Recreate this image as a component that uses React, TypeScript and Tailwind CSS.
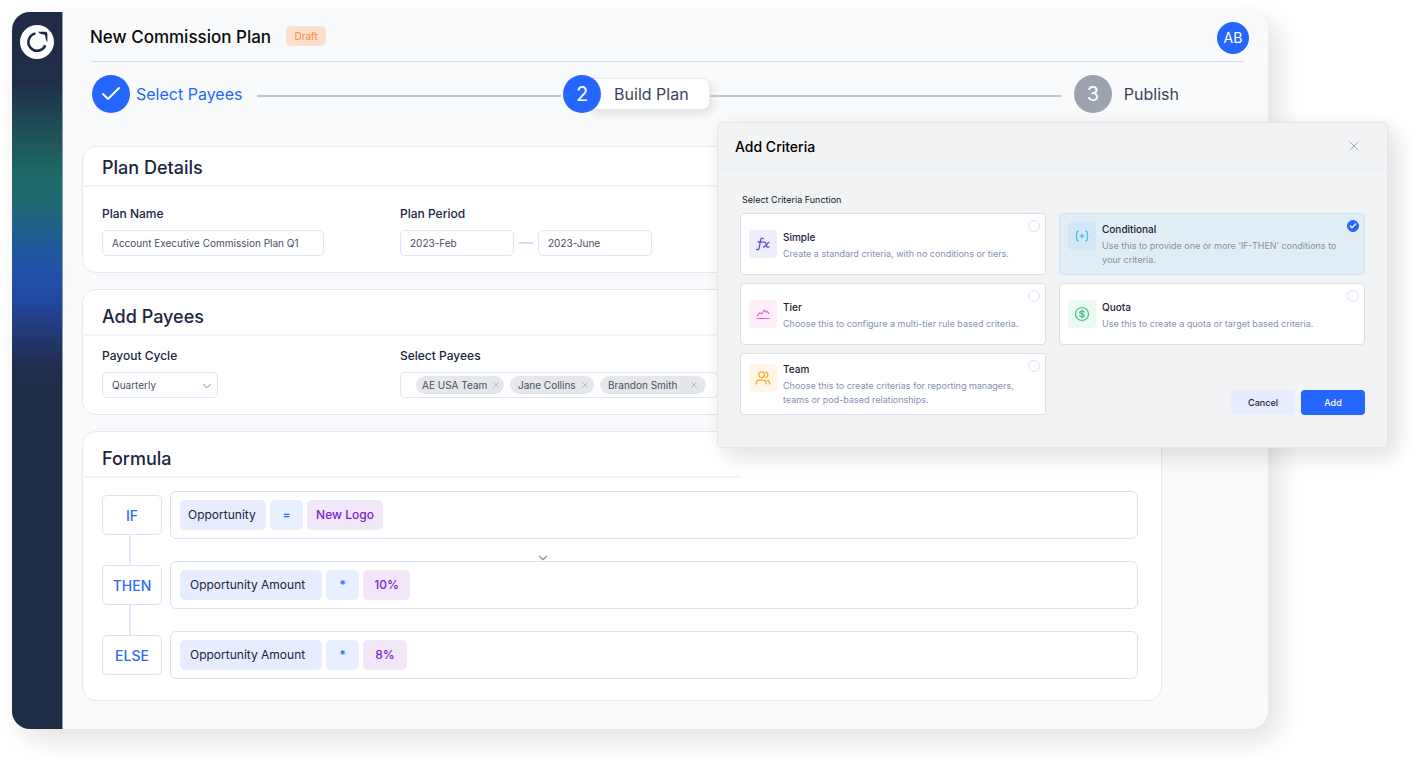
import { useState } from 'react';
import type { ReactNode } from 'react';
import { Check, ChevronDown, X } from 'lucide-react';

const LogoMark = () => (
  <svg viewBox="0 0 34 34" className="size-[34px]" fill="none">
    <circle cx="17" cy="17" r="17" fill="#fff" />
    <path d="M15.500 8.500A8.700 8.700 0 1 0 25.200 20.200" stroke="#1f2c46" strokeWidth="2.600" />
    <path
      d="M18 6.700h7.400q2 0 2 2v8.500c-1.100-1.500-1.900-3-2.100-6-.1-1-.7-1.500-1.700-1.600-2.400-.3-4-1.200-5.600-2.900Z"
      fill="#1f2c46"
    />
  </svg>
);

const FxIcon = () => (
  <svg viewBox="0 0 16 16" className="size-4" fill="none" stroke="#5b52e0" strokeWidth="1.3" strokeLinecap="round">
    <path d="M8.300 2.600C6.900 1.500 5.900 2.300 5.600 4L4.200 11.800C3.900 13.500 2.800 14.300 1.500 13.300" />
    <path d="M3.200 6h4" />
    <path d="M8.600 6.400c1.300-.6 1.900 0 2.300 1.500l.7 2.100c.4 1.300 1 1.600 2.300.9" />
    <path d="M13.900 6.400c-1.500 0-2.900 4.500-5.300 4.600" />
  </svg>
);

const BracesIcon = () => (
  <svg viewBox="0 0 16 16" className="size-4" fill="none" stroke="#45b5f0" strokeWidth="1.2" strokeLinecap="round">
    <path d="M4.300 3.200C3 3.200 2.800 3.800 2.800 4.800v1.700c0 .9-.4 1.500-1.200 1.500.8 0 1.200.6 1.200 1.500v1.700c0 1 .2 1.600 1.500 1.600" />
    <path d="M11.700 3.200c1.300 0 1.500.6 1.500 1.600v1.700c0 .9.4 1.500 1.200 1.500-.8 0-1.200.6-1.200 1.500v1.700c0 1-.2 1.600-1.500 1.600" />
    <path d="M6 8h4M8 6v4" />
  </svg>
);

const ChartIcon = () => (
  <svg viewBox="0 0 16 16" className="size-4" fill="none" stroke="#ea5fc5" strokeWidth="1.2" strokeLinecap="round" strokeLinejoin="round">
    <path d="M2.200 10L4.600 6.900l1.900.9L9.500 4.200l1.300 2 1.400-.8 1.500 2" />
    <path d="M2 12.500h12" />
  </svg>
);

const DollarIcon = () => (
  <svg viewBox="0 0 16 16" className="size-4" fill="none" stroke="#3cc57c" strokeWidth="1.2" strokeLinecap="round">
    <circle cx="8" cy="8" r="6.500" />
    <path d="M10.200 6.200C9.900 5.400 9.100 5.100 8 5.100c-1.300 0-2.200.5-2.200 1.400C5.800 8.500 10.300 7.400 10.300 9.500c0 .9-.9 1.400-2.300 1.400-1.200 0-2.100-.4-2.300-1.200M8 3.900v8.200" />
  </svg>
);

const TeamIcon = () => (
  <svg viewBox="0 0 16 16" className="size-4" fill="none" stroke="#fbab2a" strokeWidth="1.3" strokeLinecap="round">
    <circle cx="6.500" cy="4.800" r="2.900" />
    <path d="M1.500 14v-1.500c0-1.300 1-2.300 2.400-2.300h4.500c1.400 0 2.400 1 2.400 2.300V14" />
    <path d="M10.800 2.100c2.800.5 2.800 4.900 0 5.400" />
    <path d="M12.400 10.400c1.300.3 2.200 1.200 2.200 2.500V14" />
  </svg>
);

type Criteria = {
  id: string;
  name: string;
  text: string;
  icon: ReactNode;
  tile: string;
  tall?: boolean;
};

const criteria: Criteria[] = [
  { id: 'simple', name: 'Simple', text: 'Create a standard criteria, with no conditions or tiers.', icon: <FxIcon />, tile: 'bg-[#eeedfb]' },
  { id: 'conditional', name: 'Conditional', text: 'Use this to provide one or more ‘IF-THEN’ conditions to your criteria.', icon: <BracesIcon />, tile: 'bg-[#d2e8f6]', tall: true },
  { id: 'tier', name: 'Tier', text: 'Choose this to configure a multi-tier rule based criteria.', icon: <ChartIcon />, tile: 'bg-[#fdeefa]' },
  { id: 'quota', name: 'Quota', text: 'Use this to create a quota or target based criteria.', icon: <DollarIcon />, tile: 'bg-[#eaf9f1]' },
  { id: 'team', name: 'Team', text: 'Choose this to create criterias for reporting managers, teams or pod-based relationships.', icon: <TeamIcon />, tile: 'bg-[#fff6e8]', tall: true },
];

const payees = [
  { name: 'AE USA Team', pill: 'w-[88px] pl-1.5 pr-[3px]' },
  { name: 'Jane Collins', pill: 'w-[84px] pl-2 pr-1' },
  { name: 'Brandon Smith', pill: 'w-[106px] pl-2 pr-[7px]' },
];

const rules = [
  { word: 'IF', field: 'Opportunity', fieldBox: 'w-[86px] px-2', op: '=', value: 'New Logo', valueBox: 'w-[76px]' },
  { word: 'THEN', field: 'Opportunity Amount', fieldBox: 'w-[142px] px-2.5', op: '*', value: '10%', valueBox: 'w-[47px]' },
  { word: 'ELSE', field: 'Opportunity Amount', fieldBox: 'w-[142px] px-2.5', op: '*', value: '8%', valueBox: 'w-[44px]' },
];

const fieldClass = 'h-[26px] rounded-[5px] border border-[#dde5f9] bg-white px-[9px] text-[10px] text-[#475063] outline-none';
const labelClass = 'text-[12px] leading-4 font-medium text-[#1b2540]';

type CardProps = { title: string; roomy?: boolean; shortRule?: boolean; children: ReactNode };

function Card({ title, roomy, shortRule, children }: CardProps) {
  return (
    <section className="rounded-[14px] border border-[#e6e9ee] bg-white">
      <h2 className={`px-[19px] text-[18px] leading-[26px] font-medium text-[#1b2540] ${roomy ? 'pt-3.5' : 'pt-2'}`}>{title}</h2>
      <div className={`mt-1 ml-px h-0.5 bg-[#f2f3f5] ${shortRule ? 'w-[61%]' : ''}`} />
      {children}
    </section>
  );
}

function Stepper() {
  return (
    <ol className="mt-[13px] mr-[89px] ml-[29px] flex h-[38px] items-center text-[16px] text-[#3b4557]">
      <li className="flex items-center gap-1.5 text-[#2466ff]">
        <span className="flex size-[38px] items-center justify-center rounded-full bg-[#2466ff] text-white">
          <Check className="size-6" strokeWidth={2} />
        </span>
        Select Payees
      </li>
      <li className="mt-1 mr-0.5 ml-[15px] h-0.5 flex-[303] bg-[#c1c5ce]" />
      <li className="flex items-center">
        <span className="z-10 flex size-[38px] items-center justify-center rounded-full bg-[#2466ff] text-[20px] text-white">2</span>
        <span className="-ml-3 flex h-8 w-[121px] items-center rounded-r-lg border border-[#e8eaee] bg-white pl-6 shadow-[3px_4px_8px_rgba(0,0,0,0.10)]">
          Build Plan
        </span>
      </li>
      <li className="mt-1 mr-[13px] h-0.5 flex-[350] bg-[#c1c5ce]" />
      <li className="flex items-center gap-3">
        <span className="flex size-[38px] items-center justify-center rounded-full bg-[#9ca2ae] text-[20px] text-white">3</span>
        Publish
      </li>
    </ol>
  );
}

function PlanDetails() {
  return (
    <Card title="Plan Details">
      <div className="flex px-[19px] pt-[19px] pb-4">
        <div className="flex w-[298px] flex-col items-start gap-2">
          <label htmlFor="plan-name" className={labelClass}>Plan Name</label>
          <input id="plan-name" defaultValue="Account Executive Commission Plan Q1" className={`${fieldClass} w-[222px]`} />
        </div>
        <div className="flex flex-col items-start gap-2">
          <label htmlFor="period-from" className={labelClass}>Plan Period</label>
          <div className="flex items-center">
            <input id="period-from" defaultValue="2023-Feb" className={`${fieldClass} w-[114px]`} />
            <span className="mx-[5px] h-0.5 w-3.5 bg-[#d3ddec]" />
            <input aria-label="Plan period end" defaultValue="2023-June" className={`${fieldClass} w-[114px]`} />
          </div>
        </div>
      </div>
    </Card>
  );
}

function AddPayees() {
  return (
    <Card title="Add Payees" roomy>
      <div className="flex px-[19px] pt-3 pb-4">
        <div className="flex w-[298px] flex-col items-start gap-2">
          <label htmlFor="cycle" className={labelClass}>Payout Cycle</label>
          <div className="relative flex">
            <select id="cycle" className={`${fieldClass} w-[116px] appearance-none`}>
              <option>Quarterly</option>
            </select>
            <ChevronDown className="pointer-events-none absolute top-[7px] right-1 size-3.5 text-[#a9bbde]" />
          </div>
        </div>
        <div className="flex flex-col items-start gap-2">
          <span className={labelClass}>Select Payees</span>
          <div className="flex h-[26px] w-[318px] items-center gap-1.5 rounded-[5px] border border-[#dde5f9] pl-[15px]">
            {payees.map((p) => (
              <span key={p.name} className={`flex h-[18px] items-center justify-between rounded-full bg-[#e5e7eb] text-[10px] whitespace-nowrap text-[#475063] ${p.pill}`}>
                {p.name}
                <button type="button" aria-label={`Remove ${p.name}`}>
                  <X className="size-2.5 text-[#a3b5da]" />
                </button>
              </span>
            ))}
          </div>
        </div>
      </div>
    </Card>
  );
}

function Formula() {
  return (
    <Card title="Formula" roomy shortRule>
      <div className="flex flex-col pt-[13px] pr-[23px] pb-[21px] pl-[19px]">
        {rules.map((r, i) => (
          <div key={r.word}>
            {i > 0 && (
              <div className="-my-1 flex h-[30px]">
                <span className="ml-[27px] w-0.5 bg-[#e6ecfb]" />
                {i === 1 && <ChevronDown className="mt-4 ml-[405px] size-3.5 text-[#8592ad]" />}
              </div>
            )}
            <div className="flex items-center gap-2">
              <div className="flex h-10 w-[60px] items-center justify-center rounded-[5px] border border-[#d9e2f8] bg-white text-[14px] font-medium text-[#2f6bf5]">
                {r.word}
              </div>
              <div className="flex h-12 flex-1 items-center gap-1 rounded-md border border-[#d9e2f5] px-[9px] text-[12px]">
                <span className={`flex h-[30px] items-center rounded-[5px] bg-[#e7ecfe] whitespace-nowrap text-[#1b2540] ${r.fieldBox}`}>{r.field}</span>
                <span className="flex h-[30px] w-[33px] items-center justify-center rounded-[5px] bg-[#e8f0ff] font-medium text-[#2466ff]">{r.op}</span>
                <span className={`flex h-[30px] items-center justify-center rounded-[5px] bg-[#f1e7f9] font-medium whitespace-nowrap text-[#7623ce] ${r.valueBox}`}>{r.value}</span>
              </div>
            </div>
          </div>
        ))}
      </div>
    </Card>
  );
}

function CriteriaDialog() {
  const [selected, setSelected] = useState('conditional');

  return (
    <div
      role="dialog"
      aria-label="Add Criteria"
      className="absolute top-[122px] right-[29px] w-[671px] rounded-[5px] border border-[#e4e6ea] bg-[#f2f3f5] shadow-[8px_8px_22px_rgba(0,0,0,0.13)]"
    >
      <div className="flex h-[47px] items-center justify-between border-b border-[#e9edf9] pr-[25px] pl-[17px]">
        <h2 className="text-[14px] font-medium text-black">Add Criteria</h2>
        <button type="button" aria-label="Close">
          <X className="size-4 text-[#a0a8c0]" strokeWidth={1.5} />
        </button>
      </div>
      <div className="px-[22px] pt-6 pb-8">
        <p className="px-0.5 text-[9px] leading-3 text-[#111827]">Select Criteria Function</p>
        <div className="mt-[7px] grid grid-cols-2 gap-x-[13px] gap-y-2">
          {criteria.map((c) => {
            const on = c.id === selected;
            return (
              <label
                key={c.id}
                className={`relative flex h-[62px] gap-1.5 rounded-[4px] border pl-2 ${on ? 'border-[#c5e3f8] bg-[#e0edf5]' : 'border-[#dcdfe6] bg-white'} ${c.tall ? 'pt-2' : 'pt-4'}`}
              >
                <span className={`flex size-7 shrink-0 items-center justify-center rounded-[4px] ${c.tile} ${c.id === 'team' ? 'mt-0.5' : ''}`}>{c.icon}</span>
                <span className="flex-1 pr-4">
                  <span className="block text-[10px] leading-[14px] font-medium text-[#1b2233]">{c.name}</span>
                  <span className="mt-[3px] block text-[9px] leading-[14px] text-[#8592ad]">{c.text}</span>
                </span>
                <input
                  type="radio"
                  name="criteria"
                  aria-label={c.name}
                  checked={on}
                  onChange={() => setSelected(c.id)}
                  className="absolute top-[6px] right-[5px] size-3 appearance-none rounded-full border border-[#d9e2fa] bg-white checked:border-[#2466ff] checked:bg-[#2466ff]"
                />
                {on && <Check className="pointer-events-none absolute top-[8px] right-[7px] size-2 text-white" strokeWidth={4} />}
              </label>
            );
          })}
          <div className="flex items-end justify-end gap-1.5">
            <button type="button" className="h-[25px] w-16 rounded-[4px] bg-[#e7ecfe] text-[9px] font-medium text-[#1b2233]">Cancel</button>
            <button type="button" className="h-[25px] w-16 rounded-[4px] bg-[#2466ff] text-[9px] font-medium text-white">Add</button>
          </div>
        </div>
      </div>
    </div>
  );
}

export default function App() {
  return (
    <div className="relative bg-white pt-3 pr-[149px] pb-[31px] pl-3 font-['Inter',sans-serif]">
      <div className="flex rounded-[18px] bg-[#f9fafc] shadow-[10px_10px_28px_rgba(0,0,0,0.12)]">
        <aside className="w-[51px] shrink-0 rounded-l-[18px] border-r border-[#8d9aab] bg-[linear-gradient(180deg,#202b46_0px,#202e48_70px,#1f5058_120px,#1e6a68_165px,#1f6a72_190px,#205c92_225px,#2150aa_262px,#2148a0_288px,#213a76_320px,#202f52_350px,#1f2c46_380px)] px-2 pt-[13px]">
          <LogoMark />
        </aside>
        <main className="min-w-0 flex-1 pb-7">
          <header className="flex h-[49px] items-center pt-0.5 pr-[19px] pl-[27px]">
            <h1 className="text-[17px] font-medium text-[#0a0a0a]">New Commission Plan</h1>
            <span className="mb-[3px] ml-[15px] flex h-5 w-10 items-center justify-center rounded-[5px] bg-[#fbdfcc] text-[10px] text-[#ff8a3c]">Draft</span>
            <span className="ml-auto flex size-8 items-center justify-center rounded-full bg-[#2466ff] text-[14px] text-white">AB</span>
          </header>
          <hr className="mr-6 ml-7 border-[#d0dcf1]" />
          <Stepper />
          <div className="mt-[33px] mr-[106px] ml-[19px] flex flex-col gap-4">
            <PlanDetails />
            <AddPayees />
            <Formula />
          </div>
        </main>
      </div>
      <CriteriaDialog />
    </div>
  );
}
